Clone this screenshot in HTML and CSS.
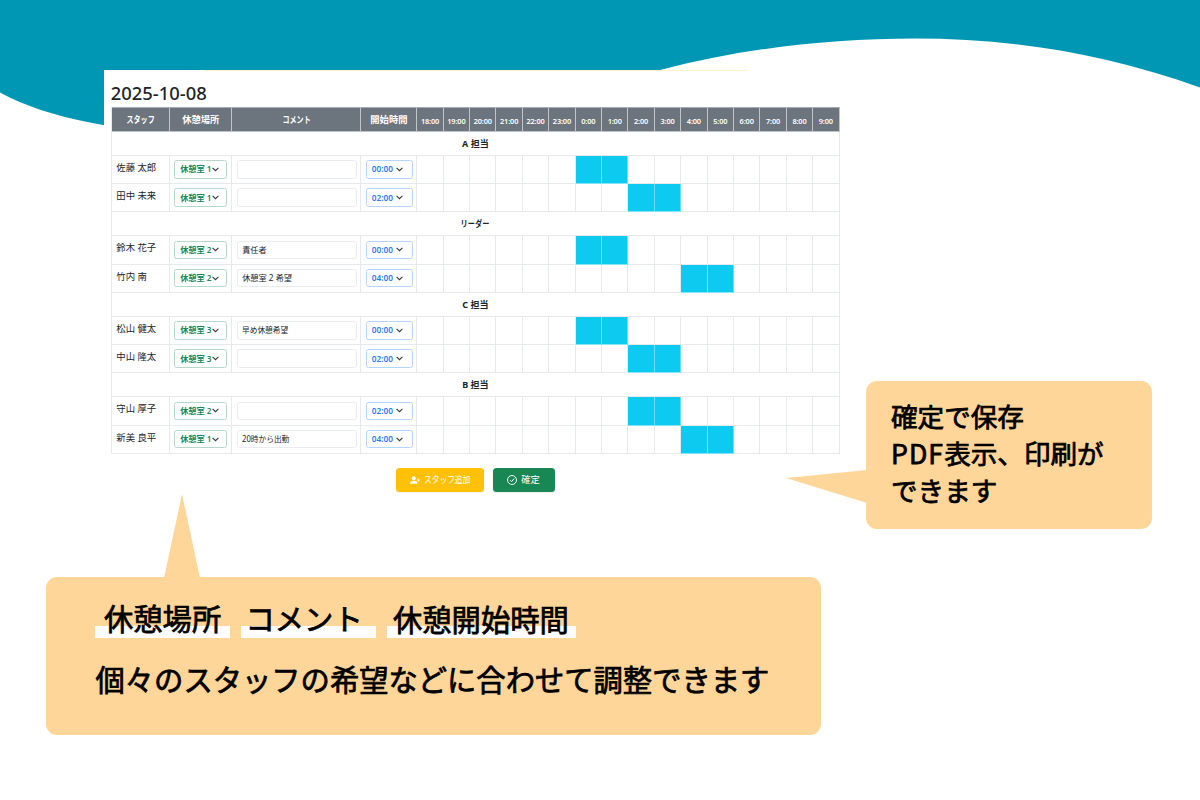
FILE: index.html
```html
<!DOCTYPE html>
<html lang="ja">
<head>
<meta charset="utf-8">
<title>休憩スケジュール</title>
<link rel="stylesheet" href="styles.css">
</head>
<body>
<main class="slide">
  <svg class="wave" viewBox="0 0 1200 140" aria-hidden="true">
    <path d="M0 0H1200V87.500C1105 53 1010 38.500 915 38.500C830 38.500 745 48 660 70L400 135H180C120 129 50 120 0 92.500Z" fill="#0097b5"/>
  </svg>
  <section class="panel">
    <div class="panel-line"></div>
    <h1 class="date">2025-10-08</h1>
    <div class="table" id="table"></div>
    <div class="actions">
      <button class="btn btn-add">
        <svg class="icon-add" viewBox="0 0 16 16"><circle cx="6" cy="5" r="3.200"/><path d="M0 14c0-3 2-5 6-5s6 2 6 5zM12.800 5.500h1.200v2h2v1.200h-2v2h-1.200v-2h-2V7.500h2z"/></svg>
        <span class="add-label">スタッフ追加</span>
      </button>
      <button class="btn btn-ok">
        <svg class="icon-ok" viewBox="0 0 16 16"><circle cx="8" cy="8" r="7.200"/><path d="M4.800 8.200l2.500 2.500 4.200-5.200"/></svg>
        <span>確定</span>
      </button>
    </div>
  </section>
  <aside class="callout callout-save">
    <svg class="tail-left" viewBox="0 0 81 34"><path d="M0 8L81 0V33Z"/></svg>
    <p>確定で保存<br><span class="latin">PDF</span>表示、印刷が<br>できます</p>
  </aside>
  <aside class="callout callout-edit">
    <svg class="tail-up" viewBox="0 0 36 84"><path d="M18 0L36 84H0Z"/></svg>
    <div class="marks">
      <span class="mark mark-place">休憩場所</span>
      <span class="mark mark-comment">コメント</span>
      <span class="mark mark-start">休憩開始時間</span>
    </div>
    <p class="edit-text">個々のスタッフの希望などに合わせて調整できます</p>
  </aside>
</main>
<script src="app.js"></script>
</body>
</html>
```
FILE: styles.css
```css
* { box-sizing: border-box; }
body { margin: 0; background: #fff; font-family: "Noto Sans", "Noto Sans CJK JP", sans-serif; color: #212529; }
.slide { position: relative; width: 1200px; height: 800px; overflow: hidden; background: #fff; padding: 69.500px 0 0 104px; }
.wave { position: absolute; left: 0; top: 0; width: 1200px; height: 140px; }
.panel { position: relative; width: 740px; height: 430px; background: #fff; padding: 0 0 0 6.800px; }
.panel-line { height: 1px; margin-left: 93px; width: 544px; background: #fff2cc; }
.date { margin: 9.300px 0 0; height: 27.500px; font-size: 18.400px; line-height: 25px; font-weight: 500; white-space: nowrap; }
.table { width: 729.200px; border-left: 1px solid #e7eaed; }
.row { display: grid; grid-template-columns: 58.200px 62.500px 129px 55.800px repeat(16, 26.400px); height: 28.200px; }
.row > div { border-right: 1px solid #e7eaed; border-bottom: 1px solid #e7eaed; min-width: 0; }
.row.head { height: 24.400px; background: #6c757d; color: #fff; font-size: 9.300px; font-weight: 600; }
.row.head > div { display: flex; align-items: center; justify-content: center; border-color: #c0c5c9; border-top: 1px solid #a7adb2; }
.row.head .hour { font-size: 7.400px; font-weight: 600; padding-top: 3px; letter-spacing: -0.150px; }
.narrow { display: inline-block; transform: scaleX(.76); white-space: nowrap; }
.group .narrow { transform: scaleX(.8); }
.group { height: 24.150px; display: flex; align-items: center; justify-content: center; border-right: 1px solid #e7eaed; border-bottom: 1px solid #e7eaed; font-size: 9px; font-weight: 700; line-height: 12px; padding-top: 1px; }
.name { padding: 5px 0 0 4.500px; font-size: 9.400px; line-height: 14px; white-space: nowrap; }
.cell { display: flex; align-items: center; padding-left: 4.200px; }
.field { height: 18.500px; border: 1px solid #e9ecef; border-radius: 2.500px; display: flex; align-items: center; padding-left: 5px; font-size: 8.200px; line-height: 12px; white-space: nowrap; }
.room { width: 53px; border-color: #b5d9c8; color: #198754; font-weight: 600; }
.comment { width: 120px; padding-left: 4.500px; }
.start { width: 47px; border-color: #b6d4fe; color: #2b7bfb; font-weight: 600; font-size: 8.300px; }
.tight { transform: scaleX(.94); transform-origin: left; }
.chevron { width: 7px; height: 5px; fill: none; stroke: #343a40; stroke-width: 1.100; flex: none; }
.start .chevron { margin-left: 3.500px; }
.row > .busy { background: #0dcaf0; border-right-color: #6edff6; border-bottom-color: #86e4f7; }
.actions { display: flex; gap: 9px; margin: 14px 0 0 285px; }
.btn { height: 24px; border: 0; border-radius: 3.500px; color: #fff; font: 9.300px/14px "Noto Sans", "Noto Sans CJK JP", sans-serif; display: flex; align-items: center; white-space: nowrap; padding: 0; box-shadow: 0 1px 2px rgba(0, 0, 0, .08); }
.btn-add { width: 88.500px; background: #ffc107; padding-left: 14px; gap: 4px; }
.btn-ok { width: 61.500px; background: #198754; padding-left: 14px; gap: 4px; }
.icon-add { width: 10px; height: 10px; fill: #fff; }
.icon-ok { width: 10px; height: 10px; fill: none; stroke: #fff; stroke-width: 1.500; }
.add-label { transform: scaleX(.83); transform-origin: left; }
.callout { position: absolute; background: #ffd699; color: #000; font-family: "Noto Sans CJK JP", sans-serif; -webkit-text-stroke: .750px #000; }
.callout svg { position: absolute; fill: #ffd699; }
.callout-save { left: 865.500px; top: 381px; width: 286.500px; height: 148px; border-radius: 11px; padding: 15.500px 0 0 25.500px; }
.callout-save p { margin: 0; font-size: 26.600px; line-height: 37px; white-space: nowrap; }
.latin { letter-spacing: 1.100px; }
.tail-left { left: -80px; top: 89px; width: 81px; height: 34px; }
.callout-edit { left: 46px; top: 577px; width: 775.400px; height: 158.400px; border-radius: 11px; padding: 20px 0 0 49px; }
.tail-up { left: 118px; top: -83px; width: 36px; height: 84px; }
.marks { display: flex; gap: 11.500px; }
.mark { font-size: 29.300px; line-height: 40px; height: 41px; white-space: nowrap; background: linear-gradient(#fdfdfe, #fdfdfe) 0 29px / 100% 12px no-repeat; }
.mark-place { width: 134.500px; padding-left: 9px; }
.mark-comment { width: 134.500px; padding-left: 4.500px; }
.mark-start { width: 189px; padding-left: 6px; line-height: 43px; }
.edit-text { margin: 17.500px 0 0 .500px; font-size: 29.300px; line-height: 44px; white-space: nowrap; }
```
FILE: app.js
```js
const hours = [18, 19, 20, 21, 22, 23, 0, 1, 2, 3, 4, 5, 6, 7, 8, 9];
const groups = [
  ['A 担当', [['佐藤 太郎', 1, '', 0], ['田中 未来', 1, '', 2]]],
  ['<span class="narrow">リーダー</span>', [['鈴木 花子', 2, '責任者', 0], ['竹内 南', 2, '休憩室 2 希望', 4]]],
  ['C 担当', [['松山 健太', 3, '早め休憩希望', 0], ['中山 隆太', 3, '', 2]]],
  ['B 担当', [['守山 厚子', 2, '', 2], ['新美 良平', 1, '20時から出勤', 4]]]
];
const chevron = '<svg class="chevron" viewBox="0 0 7 5"><path d="M.6 .8L3.500 3.700L6.400 .8"/></svg>';
let html = '<div class="row head"><div><span class="narrow">スタッフ</span></div><div>休憩場所</div>' +
  '<div><span class="narrow">コメント</span></div><div>開始時間</div>' +
  hours.map(h => `<div class="hour">${h}:00</div>`).join('') + '</div>';
for (const [title, staff] of groups) {
  html += `<div class="group">${title}</div>`;
  for (const [name, room, comment, start] of staff) {
    const tight = /[ぁ-ん]/.test(comment) ? ' class="tight"' : '';
    html += `<div class="row"><div class="name">${name}</div>` +
      `<div class="cell"><div class="field room">休憩室 ${room}${chevron}</div></div>` +
      `<div class="cell"><div class="field comment"><span${tight}>${comment}</span></div></div>` +
      `<div class="cell"><div class="field start">0${start}:00${chevron}</div></div>` +
      hours.map(h => `<div class="${h === start || h === start + 1 ? 'busy' : ''}"></div>`).join('') + '</div>';
  }
}
document.getElementById('table').innerHTML = html;
```
